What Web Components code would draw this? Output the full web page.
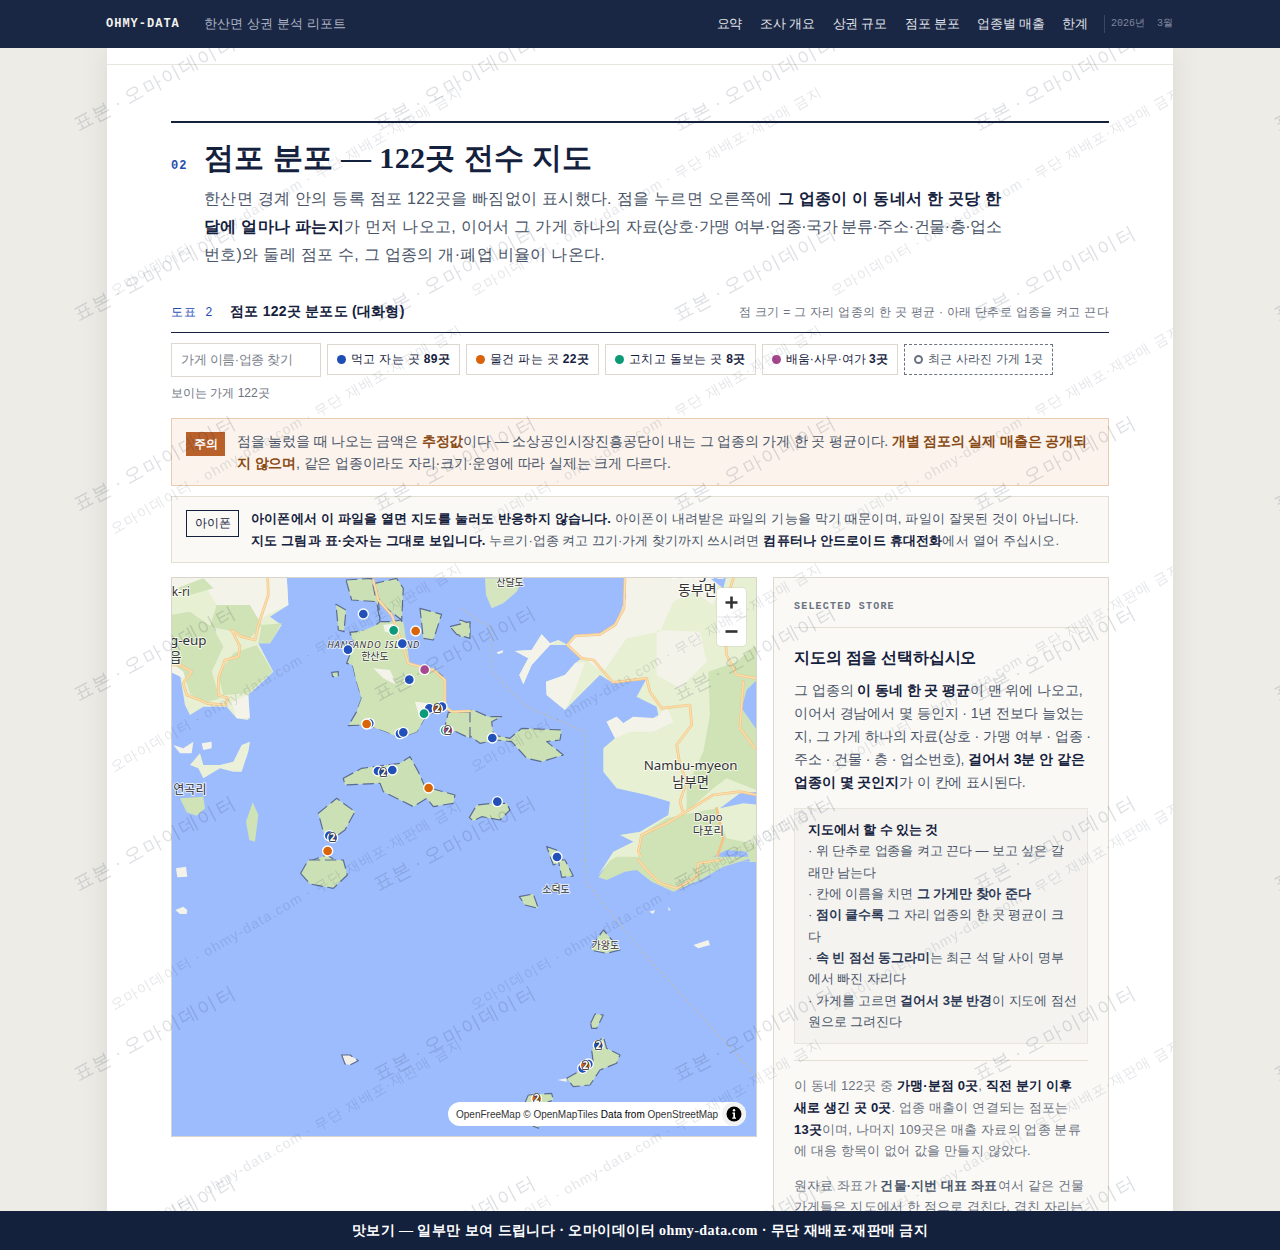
<!DOCTYPE html>
<html lang="ko">
<head>
<meta charset="utf-8">
<title>한산면 상권 분석 리포트</title>
<style>
  html, body { margin: 0; height: 100%; overflow: hidden; }
  body {
    background: #edece7;
    color: #14213d;
    font-family: "Liberation Sans", sans-serif;
    font-size: 14px;
  }
</style>
</head>
<body>
<ohmy-topbar title-text="한산면 상권 분석 리포트" period="2026년 3월"></ohmy-topbar>
<report-paper>
  <section-head num="02" heading="점포 분포 — 122곳 전수 지도">
    한산면 경계 안의 등록 점포 122곳을 빠짐없이 표시했다. 점을 누르면 오른쪽에 <b>그 업종이 이 동네서 한 곳당 한 달에 얼마나 파는지</b>가 먼저 나오고, 이어서 그 가게 하나의 <span style="letter-spacing:-.4px">자료(상호·가맹 여부·업종·국가 분류·주소·건물·층·업소</span>번호)와 둘레 점포 수, 그 업종의 개·폐업 비율이 나온다.
  </section-head>
  <figure-head label="도표 2" heading="점포 122곳 분포도 (대화형)" note="점 크기 = 그 자리 업종의 한 곳 평균 · 아래 단추로 업종을 켜고 끈다"></figure-head>
  <store-filter>
    <filter-chip color="#1f4db5" name="먹고 자는 곳" count="89곳"></filter-chip>
    <filter-chip color="#d9620a" name="물건 파는 곳" count="22곳"></filter-chip>
    <filter-chip color="#0b9a76" name="고치고 돌보는 곳" count="8곳"></filter-chip>
    <filter-chip color="#a5458c" name="배움·사무·여가" count="3곳" style="letter-spacing:0"></filter-chip>
    <filter-chip hollow name="최근 사라진 가게 1곳" style="letter-spacing:.25px"></filter-chip>
  </store-filter>
  <notice-box kind="warn" tag="주의">점을 눌렀을 때 나오는 금액은 <em>추정값</em>이다 — 소상공인시장진흥공단이 내는 그 업종의 가게 한 곳 평균이다. <em>개별 점포의 실제 매출은 공개되지 않으며</em>, 같은 업종이라도 자리·크기·운영에 따라 실제는 크게 다르다.</notice-box>
  <notice-box kind="info" tag="아이폰"><b>아이폰에서 이 파일을 열면 지도를 눌러도 반응하지 않습니다.</b> 아이폰이 내려받은 파일의 기능을 막기 때문이며, 파일이 잘못된 것이 아닙니다.<br><b>지도 그림과 표·숫자는 그대로 보입니다.</b> <span style="letter-spacing:0">누르기·업종 켜고 끄기·가게 찾기까지 쓰시려면</span> <strong>컴퓨터나 안드로이드 휴대전화</strong>에서 열어 주십시오.</notice-box>
  <map-layout>
    <store-map slot="map"></store-map>
    <store-panel slot="panel"></store-panel>
  </map-layout>
</report-paper>
<ohmy-watermark></ohmy-watermark>
<sample-bar>맛보기 — 일부만 보여 드립니다 · 오마이데이터 ohmy-data.com · 무단 재배포·재판매 금지</sample-bar>

<script>
const SANS = `"Liberation Sans", sans-serif`;
const MONO = `"Liberation Mono", monospace`;
const SERIF = `"Liberation Serif", serif`;
const LABEL = `"Noto Sans", "Noto Sans CJK KR", sans-serif`;

class OhmyTopbar extends HTMLElement {
  connectedCallback() {
    const root = this.attachShadow({ mode: "open" });
    const items = ["요약", "조사 개요", "상권 규모", "점포 분포", "업종별 매출", "한계"];
    root.innerHTML = `
      <style>
        :host { display: flex; align-items: center; height: 48px; padding: 0 107px 0 106px; background: #1a2744; position: relative; z-index: 3; }
        .brand { font: bold 12px ${MONO}; letter-spacing: 1px; color: #f2f2ee; width: 98px; }
        .name { font: 13px ${SANS}; color: #aeb5c4; flex: 1; letter-spacing: .13px; }
        nav { display: flex; gap: 18px; }
        nav span { font: 13px ${SANS}; color: #e1e4ea; letter-spacing: -.25px; }
        .period { font: 10px ${MONO}; color: #7d869c; margin-left: 16px; padding-left: 6px; border-left: 1px solid #3a4662; height: 18px; line-height: 18px; }
      </style>
      <div class="brand">OHMY-DATA</div>
      <div class="name">${this.getAttribute("title-text")}</div>
      <nav>${items.map((t) => `<span>${t}</span>`).join("")}</nav>
      <div class="period">${this.getAttribute("period").replace(" ", "&nbsp;&nbsp;")}</div>
    `;
  }
}
customElements.define("ohmy-topbar", OhmyTopbar);

class ReportPaper extends HTMLElement {
  constructor() {
    super();
    this.attachShadow({ mode: "open" }).innerHTML = `
      <style>
        :host { display: block; width: 1066px; margin: 0 auto; background: #fff; box-shadow: 0 0 28px rgba(60,55,40,.10); }
        .strip { height: 16px; border-bottom: 1px solid #e8e5dc; }
        .body { padding: 56px 64px 0; }
      </style>
      <div class="strip"></div>
      <div class="body"><slot></slot></div>
    `;
  }
}
customElements.define("report-paper", ReportPaper);

class SectionHead extends HTMLElement {
  connectedCallback() {
    this.attachShadow({ mode: "open" }).innerHTML = `
      <style>
        :host { display: block; border-top: 2px solid #14213d; padding-top: 14px; }
        .top { display: flex; align-items: flex-end; }
        .num { font: bold 12px/14px ${MONO}; color: #1f4db5; letter-spacing: 1px; width: 33px; padding-bottom: 6px; }
        h2 { margin: 0; font: bold 30px/42px ${SERIF}; color: #14213d; letter-spacing: .35px; }
        p { margin: 6px 0 0 33px; width: 802px; font: 16px/28px ${SANS}; color: #4a5568; letter-spacing: .3px; }
        ::slotted(b) { font-weight: 700; color: #14213d; }
      </style>
      <div class="top"><span class="num">${this.getAttribute("num")}</span><h2>${this.getAttribute("heading")}</h2></div>
      <p><slot></slot></p>
    `;
  }
}
customElements.define("section-head", SectionHead);

class FigureHead extends HTMLElement {
  connectedCallback() {
    this.attachShadow({ mode: "open" }).innerHTML = `
      <style>
        :host { display: flex; align-items: baseline; margin-top: 32px; padding-bottom: 10px; border-bottom: 1px solid #14213d; }
        .label { font: 12px ${MONO}; color: #1f4db5; letter-spacing: 1px; width: 59px; }
        .heading { font: bold 14px/20px ${SANS}; color: #14213d; flex: 1; letter-spacing: .25px; }
        .note { font: 12px/20px ${SANS}; color: #6b7280; letter-spacing: .3px; }
      </style>
      <span class="label">${this.getAttribute("label")}</span>
      <span class="heading">${this.getAttribute("heading")}</span>
      <span class="note">${this.getAttribute("note")}</span>
    `;
  }
}
customElements.define("figure-head", FigureHead);

class StoreFilter extends HTMLElement {
  constructor() {
    super();
    this.attachShadow({ mode: "open" }).innerHTML = `
      <style>
        :host { display: block; margin-top: 10px; }
        .row { display: flex; align-items: flex-start; gap: 6px; }
        .search { box-sizing: border-box; width: 150px; height: 34px; padding: 0 9px; border: 1px solid #ddd8ce; background: #fff; font: 13px/32px ${SANS}; color: #7a8089; white-space: nowrap; letter-spacing: -.35px; }
        .count { margin-top: 7px; font: 12px/18px ${SANS}; color: #6b7280; }
      </style>
      <div class="row"><div class="search">가게 이름·업종 찾기</div><slot></slot></div>
      <div class="count">보이는 가게 122곳</div>
    `;
  }
}
customElements.define("store-filter", StoreFilter);

class FilterChip extends HTMLElement {
  connectedCallback() {
    const hollow = this.hasAttribute("hollow");
    const color = this.getAttribute("color");
    this.attachShadow({ mode: "open" }).innerHTML = `
      <style>
        :host { display: inline-flex; align-items: center; box-sizing: border-box; height: 31px; margin-top: 1px; padding: 0 9px; gap: 5px; background: #fff; letter-spacing: .33px;
          border: 1px ${hollow ? "dashed #6b7280" : "solid #ddd8ce"}; font: 12px ${SANS}; color: ${hollow ? "#4a5568" : "#14213d"}; white-space: nowrap; }
        i { width: 9px; height: 9px; border-radius: 50%; ${hollow ? "box-sizing:border-box;border:2px solid #6b7280;" : `background:${color};`} }
        b { font-weight: 700; }
      </style>
      <i></i><span>${this.getAttribute("name")}${this.hasAttribute("count") ? ` <b>${this.getAttribute("count")}</b>` : ""}</span>
    `;
  }
}
customElements.define("filter-chip", FilterChip);

class NoticeBox extends HTMLElement {
  connectedCallback() {
    const warn = this.getAttribute("kind") === "warn";
    this.attachShadow({ mode: "open" }).innerHTML = `
      <style>
        :host { display: flex; align-items: flex-start; box-sizing: border-box; gap: 12px; padding: 11px 14px; margin-top: ${warn ? 16 : 10}px;
          background: ${warn ? "#fbf3ec" : "#faf9f6"}; border: 1px solid ${warn ? "#e8cdb0" : "#e2ded4"};
          font: ${warn ? "14px" : "13px"}/22px ${SANS}; letter-spacing: ${warn ? "-.16px" : ".19px"}; color: #4a5568; height: ${warn ? 68 : 67}px; }
        .tag { flex: none; box-sizing: border-box; margin-top: 2px; height: ${warn ? 24 : 27}px; padding: 0 7.5px; letter-spacing: 0; font: ${warn ? 700 : 500} 12px/${warn ? 24 : 25}px ${SANS};
          ${warn ? "background:#b8612b;color:#fff;" : "border:1px solid #14213d;color:#14213d;"} }
        ::slotted(em) { font-style: normal; font-weight: 700; color: #8a4a14; }
        ::slotted(b) { font-weight: 700; color: #14213d; }
        ::slotted(strong) { font-weight: 700; color: #14213d; }
      </style>
      <span class="tag">${this.getAttribute("tag")}</span>
      <div><slot></slot></div>
    `;
  }
}
customElements.define("notice-box", NoticeBox);

class MapLayout extends HTMLElement {
  constructor() {
    super();
    this.attachShadow({ mode: "open" }).innerHTML = `
      <style>
        :host { display: grid; grid-template-columns: 586px 336px; gap: 16px; margin-top: 14px; align-items: start; }
      </style>
      <slot name="map"></slot><slot name="panel"></slot>
    `;
  }
}
customElements.define("map-layout", MapLayout);

class StoreMap extends HTMLElement {
  marker(x, y, color, label) {
    const text = label ? `<text x="${x}" y="${y + 11}" text-anchor="middle" class="cnt">${label}</text>` : "";
    return `<circle cx="${x}" cy="${y}" r="15" fill="${color}" stroke="#fff" stroke-width="4"/>${text}`;
  }

  connectedCallback() {
    const B = "#2150b8", O = "#d9650a", G = "#0b9b78", P = "#a8488f";
    const m = (x, y, c, l) => this.marker(x, y, c, l);
    this.attachShadow({ mode: "open" }).innerHTML = `
      <style>
        :host { display: block; position: relative; box-sizing: border-box; width: 586px; height: 560px; border: 1px solid #d8d4ca; overflow: hidden; background: #9dbcfd; }
        svg { display: block; width: 584px; height: 558px; }
        .land { fill: #e7f0d3; }
        .white { fill: #f4f3ea; }
        .green { fill: #cfe3b6; }
        .isle { fill: #cbe0b4; stroke: #5a6c94; stroke-width: 3.5; stroke-dasharray: 34 14; stroke-linejoin: round; }
        .road { fill: none; stroke: #f4c384; stroke-width: 8; stroke-linejoin: round; stroke-linecap: round; }
        .road2 { fill: none; stroke: #fbe0ae; stroke-width: 4; stroke-linejoin: round; stroke-linecap: round; }
        .sea { fill: #9dbcfd; }
        .border { fill: none; stroke: #bdb9ab; stroke-width: 3.5; stroke-dasharray: 8 8; }
        text { font-family: ${LABEL}; }
        .lab { fill: #333; paint-order: stroke; stroke: rgba(255,255,255,.75); stroke-width: 2px; stroke-linejoin: round; }
        .cnt { font: bold 30px ${LABEL}; fill: #fff; stroke: #333; stroke-width: 5; paint-order: stroke; }
        .zoom { position: absolute; right: 10px; top: 10px; width: 29px; height: 58px; background: #fff; border-radius: 4px; box-shadow: 0 0 0 1px rgba(0,0,0,.05); }
        .zoom svg { width: 29px; height: 58px; }
        .attr { position: absolute; right: 10px; bottom: 10px; display: flex; align-items: center; box-sizing: border-box; height: 24px; width: 298px; padding-left: 8px; border-radius: 12px; background: #fff; font: 10px "Liberation Sans", sans-serif; color: #333; white-space: nowrap; }
        .attr b { font-weight: 400; color: #000; }
        .attr svg { position: absolute; right: 2px; top: 2px; width: 20px; height: 20px; }
        .attr .ring { position: absolute; right: 0; top: 0; width: 24px; height: 24px; border-radius: 50%; background: #f2f2f2; }
      </style>
      <svg viewBox="172 578 584 558" xmlns="http://www.w3.org/2000/svg">
        <g transform="translate(460,575) scale(.3333)">
          <path class="border" d="M0,98 L95,160 L95,290 L200,395 L375,470 L375,860"/>
          <path class="land" d="M495,0 L498,70 L470,140 L430,175 L345,180 L320,208 L295,195 L270,205 L245,178 L215,225 L165,228 L205,250 L178,300 L190,328 L215,270 L270,210 L320,210 L365,250 L345,265 L315,300 L258,320 L260,360 L315,405 L350,370 L420,300 L460,325 L560,310 L530,365 L590,395 L595,420 L560,440 L520,425 L490,445 L470,425 L440,440 L465,490 L430,520 L430,590 L470,640 L560,660 L630,680 L625,720 L540,770 L480,780 L520,800 L460,830 L415,900 L450,860 L900,860 L900,0 Z"/>
          <path class="white" d="M495,0 L498,70 L470,140 L430,175 L345,180 L320,208 L370,250 L430,290 L500,190 L600,170 L640,80 L700,50 L760,90 L780,0 Z M245,178 L215,225 L165,228 L205,250 L178,300 L190,328 L215,270 L270,210 L295,195 L270,205 Z M258,320 L315,300 L345,265 L375,262 L345,345 L315,405 L260,360 Z M440,440 L470,425 L490,445 L520,425 L590,430 L620,395 L640,440 L580,470 L510,470 L465,490 Z M590,165 L720,170 L740,260 L660,340 L590,300 Z"/>
          <path class="green" d="M745,290 L830,260 L880,215 L900,215 L900,650 L800,610 L760,640 L680,710 L680,640 L730,530 L750,420 Z"/>
          <path class="green" d="M540,860 L540,780 L620,730 L690,715 L770,700 L800,790 L900,810 L900,860 Z"/>
          <path class="sea" d="M900,305 L860,345 L845,400 L900,478 Z M900,650 L840,655 L780,700 L850,685 L900,690 Z M790,40 L750,10 L800,0 Z M700,860 L750,850 L800,825 L860,830 L870,860 Z"/>
          <path class="road" d="M495,10 L492,100 L465,150 L420,178 L345,183 L322,210 L365,250 L400,255 L435,295 L460,322 L560,310 L570,350 L605,400 L690,390 L695,450 L650,510 L660,570 L680,620 L660,680 L670,715 L620,745 L545,780 L535,830 L550,860 M670,715 L760,660 L840,650 L890,660 M820,10 L790,110 L800,240 L830,300 L890,310 M850,320 L840,460 L885,520 M700,850 L770,850 L790,790 L770,700"/>
          <path class="road2" d="M495,10 L492,100 L465,150 L420,178 L345,183 L322,210 L365,250 L400,255 L435,295 L460,322 L560,310 L570,350 L605,400 L690,390 L695,450 L650,510 L660,570 L680,620 L660,680 L670,715 L620,745 L545,780 L535,830 L550,860 M670,715 L760,660 L840,650 L890,660 M820,10 L790,110 L800,240 L830,300 L890,310 M850,320 L840,460 L885,520"/>
          <path class="isle" d="M0,410 L40,405 L85,425 L125,425 L95,440 L100,480 L150,490 L185,460 L305,465 L300,495 L260,500 L310,540 L245,560 L200,550 L155,500 L110,495 L60,505 L0,460 Z"/>
          <path class="isle" d="M28,728 L50,690 L95,685 L140,685 L150,705 L120,735 L65,725 L40,738 Z"/>
          <path class="isle" d="M0,135 L30,145 L30,175 L0,188 Z"/>
          <path class="isle" d="M260,815 L290,825 L310,860 L280,870 Z"/>
          <path class="white" d="M110,232 L128,226 L130,232 L115,238 Z"/>
          <path class="isle" style="fill:#d4e5c0;stroke:none" d="M75,10 L190,10 L170,50 L130,85 L95,100 L78,60 Z"/>
        </g>
        <g transform="translate(460,860) scale(.3333)">
          <path class="border" d="M375,0 L380,70 L560,290 L890,650"/>
          <path class="green" d="M415,52 L450,2 L470,-10 L890,-10 L790,20 L720,60 L640,95 L575,65 L530,30 L495,35 L440,60 Z"/>
          <path class="road" d="M535,0 L560,30 L600,70 L650,85 L710,50 L715,10 L780,0"/>
          <path class="road2" d="M535,0 L560,30 L600,70 L650,85 L710,50 L715,10 L780,0"/>
          <path class="isle" d="M295,0 L315,0 L340,48 L305,52 Z"/>
          <path class="isle" d="M178,110 L220,102 L235,145 L195,135 Z"/>
          <path class="isle" d="M275,75 L295,70 L300,95 L275,95 Z"/>
          <path class="isle" d="M392,265 L430,210 L465,250 L480,270 L440,280 L400,272 Z"/>
          <path class="isle" d="M392,490 L405,462 L430,465 L410,505 L395,505 Z"/>
          <path class="isle" d="M320,655 L400,610 L395,570 L430,530 L440,565 L480,585 L470,610 L420,630 L390,675 L340,680 Z"/>
          <path class="isle" d="M205,705 L275,700 L280,720 L255,730 L235,805 L200,790 L190,740 Z"/>
          <path class="white" d="M700,255 L745,240 L750,255 L715,265 Z M568,155 L585,150 L580,162 Z M625,140 L632,150 L626,152 Z"/>
          <path class="white" d="M292,660 L320,655 L320,665 Z"/>
        </g>
        <g transform="translate(170,575) scale(.3333)">
          <path class="land" d="M0,0 L350,0 L355,90 L300,125 L335,150 L300,205 L265,205 L310,290 L235,360 L235,435 L200,430 L170,395 L100,395 L60,420 L45,390 L30,300 L0,290 Z"/>
          <path class="white" d="M0,0 L350,0 L355,90 L290,120 L250,155 L180,130 L140,90 L110,40 L30,50 L0,70 Z M185,380 L235,360 L240,430 L200,430 Z M0,250 L60,290 L40,310 L0,290 Z"/>
          <path class="green" d="M140,90 L240,90 L275,150 L240,190 L170,165 L120,155 Z M0,120 L60,110 L130,160 L160,215 L125,290 L150,370 L100,385 L60,355 L40,290 L0,260 Z M190,235 L260,210 L308,290 L235,355 L160,360 L145,300 Z M275,150 L335,145 L300,205 L265,205 Z M100,10 L130,40 L60,60 L20,40 Z"/>
          <path class="road" d="M293,10 L295,60 L265,150 L255,195 L215,185 L185,165 L210,215 L205,245 L165,255 L145,310 L145,360 L175,370 L165,390 L110,385 L90,375 L50,360 L40,325 L65,290 L30,270 L0,270"/>
          <path class="road2" d="M293,10 L295,60 L265,150 L255,195 L215,185 L185,165 L210,215 L205,245 L165,255 L145,310 L145,360 L175,370 L165,390 L110,385 L90,375 L50,360 L40,325 L65,290 L30,270 L0,270"/>
          <path class="white" d="M10,510 L40,520 L70,500 L65,535 L30,535 Z M95,505 L125,500 L125,520 L100,525 Z"/>
          <path class="white" d="M90,535 L100,570 L150,570 L190,560 L215,510 L240,500 L235,530 L215,590 L190,590 L150,580 L100,610 L85,580 L60,570 Z" style="fill:#eaf1d8"/>
          <path class="green" d="M30,670 L100,665 L105,700 L80,722 L50,712 Z"/>
          <path class="green" d="M228,740 L248,682 L265,720 L255,800 L238,795 Z"/>
          <path class="isle" d="M528,15 L605,10 L615,60 L625,70 L630,140 L600,165 L540,172 L552,205 L530,265 L548,270 L560,320 L575,370 L560,410 L535,452 L590,450 L650,470 L690,490 L740,470 L770,420 L825,400 L825,310 L790,280 L735,270 L715,265 L695,200 L695,135 L650,100 L625,70 L615,25 L680,10 L700,40 L695,135 L660,140 L630,140 L620,80 L545,75 Z"/>
          <path class="green" d="M620,150 L700,140 L720,270 L800,285 L825,320 L825,400 L770,420 L740,470 L690,490 L650,470 L590,450 L560,410 L575,370 L560,320 L548,270 L552,205 L560,175 Z"/>
          <path class="white" d="M610,280 L660,285 L680,330 L640,310 Z M735,380 L780,385 L745,415 Z M640,150 L680,145 L680,175 L645,170 Z"/>
          <path class="isle" d="M498,88 L528,105 L522,170 L505,165 Z"/>
          <path class="isle" d="M750,100 L815,118 L790,195 L760,190 Z"/>
          <path class="isle" d="M840,155 L900,140 L900,190 L860,178 Z"/>
          <path class="isle" d="M485,292 L505,290 L505,305 L488,305 Z"/>
          <path class="isle" d="M900,410 L835,412 L825,455 L900,490 Z"/>
          <path class="isle" d="M520,610 L575,580 L690,565 L720,545 L745,590 L765,635 L855,660 L850,685 L790,695 L770,670 L730,695 L640,650 L630,625 L525,630 Z"/>
          <path class="isle" d="M445,715 L500,670 L555,710 L525,765 L490,790 L460,770 Z"/>
          <path class="isle" d="M415,860 L470,840 L520,870 L530,900 L415,900 Z"/>
          <path class="road" d="M610,15 L625,75 L665,120 L695,200 L715,265 L790,285 L825,315 L825,395 L845,410 L900,408"/>
          <path class="road2" d="M610,15 L625,75 L665,120 L695,200 L715,265 L790,285 L825,315 L825,395 L845,410 L900,408"/>
        </g>
        <g transform="translate(170,860) scale(.3333)">
          <path class="isle" d="M392,40 L415,0 L520,0 L532,45 L490,85 L420,72 Z"/>
          <path class="white" d="M18,25 L48,20 L52,50 L22,52 Z M16,150 L40,140 L52,150 L50,162 L30,162 Z"/>
          <path class="isle" style="fill:#f1efe8" d="M515,585 L540,585 L565,602 L540,615 L525,612 Z"/>
        </g>
        <g transform="translate(460,575) scale(.3333)">
          <text class="lab" x="150" y="33" text-anchor="middle" style="font-size:30px;stroke-width:6px">산달도</text>
          <text class="lab" x="712" y="10" text-anchor="middle" style="font-size:42px;stroke-width:6px">Dongbu</text>
          <text class="lab" x="712" y="59" text-anchor="middle" style="font-size:42px;stroke-width:6px">동부면</text>
          <text class="lab" x="692" y="585" text-anchor="middle" style="font-size:40px;stroke-width:6px">Nambu-myeon</text>
          <text class="lab" x="692" y="635" text-anchor="middle" style="font-size:40px;stroke-width:6px">남부면</text>
          <text class="lab" x="745" y="738" text-anchor="middle" style="font-size:34px;stroke-width:6px">Dapo</text>
          <text class="lab" x="745" y="781" text-anchor="middle" style="font-size:34px;stroke-width:6px">다포리</text>
          <text class="lab" x="288" y="953" text-anchor="middle" style="font-size:30px;stroke-width:6px">소덕도</text>
          <text class="lab" x="436" y="1122" text-anchor="middle" style="font-size:30px;stroke-width:6px">가왕도</text>
        </g>
        <g transform="translate(170,575) scale(.3333)">
          <text class="lab" x="5" y="62" style="font-size:36px;stroke-width:6px">k-ri</text>
          <text class="lab" x="0" y="211" style="font-size:40px;stroke-width:6px">g-eup</text>
          <text class="lab" x="-2" y="261" style="font-size:40px;stroke-width:6px">읍</text>
          <text class="lab" x="10" y="656" style="font-size:36px;stroke-width:6px">연곡리</text>
          <text class="lab" x="472" y="220" style="font-size:28px;font-style:italic;letter-spacing:2.5px;stroke-width:5px">HANSANDO ISLAND</text>
          <text class="lab" x="615" y="255" text-anchor="middle" style="font-size:30px;stroke-width:5px">한산도</text>
          ${m(580, 117, B)}${m(671, 166, G)}${m(737, 168, O)}${m(697, 206, B)}${m(534, 224, B)}${m(764, 284, P)}${m(718, 314, B)}
          ${m(816, 395, B)}${m(778, 400, B)}${m(802, 401, "#b45a14", "2")}${m(762, 416, G)}
          ${m(598, 445, B)}${m(590, 447, O)}${m(690, 476, B)}${m(700, 472, B)}
          ${m(826, 466, G)}${m(834, 466, P, "2")}
          ${m(624, 588, B)}${m(640, 592, B, "2")}${m(667, 585, B)}${m(776, 639, O)}
          ${m(478, 782, B)}${m(488, 788, B, "2")}${m(473, 828, O)}
        </g>
        <g transform="translate(460,575) scale(.3333)">
          ${m(97, 489, B)}${m(112, 680, B)}${m(291, 846, B)}
        </g>
        <g transform="translate(460,860) scale(.3333)">
          ${m(415, 556, B, "2")}${m(385, 612, B)}${m(368, 625, B)}${m(376, 616, O, "2")}${m(230, 716, O, "2")}
        </g>
      </svg>
      <div class="zoom">
        <svg viewBox="0 0 29 58">
          <path d="M14.5 8.5v12M8.5 14.5h12" stroke="#333" stroke-width="2.6" fill="none"/>
          <path d="M0 29h29" stroke="#e5e5e5" stroke-width="1"/>
          <path d="M8.5 43.5h12" stroke="#333" stroke-width="2.6" fill="none"/>
        </svg>
      </div>
      <div class="attr">
        <span>OpenFreeMap © OpenMapTiles <b>Data from</b> OpenStreetMap</span>
        <span class="ring"></span>
        <svg viewBox="0 0 20 20">
          <circle cx="10" cy="10" r="7.5" fill="#000"/>
          <circle cx="10" cy="6.2" r="1.2" fill="#fff"/>
          <path d="M8.4 8.6h2.6v5h1v1.2H8.2v-1.2h1.1V9.8H8.4z" fill="#fff"/>
        </svg>
      </div>
    `;
  }
}
customElements.define("store-map", StoreMap);

class StorePanel extends HTMLElement {
  connectedCallback() {
    this.attachShadow({ mode: "open" }).innerHTML = `
      <style>
        :host { display: block; box-sizing: border-box; padding: 0 20px 24px; background: #faf9f6; border: 1px solid #ddd8ce; font: 14px/23px ${SANS}; color: #4a5568; }
        b { font-weight: 700; color: #14213d; }
        .eyebrow { height: 50px; box-sizing: border-box; padding-top: 22px; border-bottom: 1px solid #e4dfd5; font: bold 10px/14px ${MONO}; letter-spacing: 1.2px; color: #6b7280; }
        h3 { margin: 18px 0 9px; font: bold 16px/24px ${SANS}; color: #14213d; letter-spacing: -.2px; }
        p { margin: 0; }
        .lead { white-space: nowrap; letter-spacing: -.08px; }
        .guide { margin-top: 14px; padding: 10px 13px 11px; background: #f4f3f0; border: 1px solid #e8e5dd; font-size: 13px; line-height: 21.33px; white-space: nowrap; letter-spacing: -.08px; }
        .guide strong { display: block; font-weight: 700; color: #14213d; }
        .guide b { color: #2c3a55; font-weight: 700; }
        .guide div { color: #4a5568; }
        hr { border: 0; border-top: 1px solid #e4dfd5; margin: 16px 0 14px; }
        .stats { font-size: 13px; letter-spacing: .15px; line-height: 21.7px; color: #6b7280; }
        .stats + .stats { margin-top: 12.5px; }
        .stats .dim { font-weight: 700; color: #4a5568; }
        .keep { white-space: nowrap; }
      </style>
      <div class="eyebrow">SELECTED STORE</div>
      <h3>지도의 점을 선택하십시오</h3>
      <p class="lead">그 업종의 <b>이 동네 한 곳 평균</b>이 맨 위에 나오고,<br>이어서 경남에서 몇 등인지 · 1년 전보다 늘었는<br>지, 그 가게 하나의 자료(상호 · 가맹 여부 · 업종 ·<br>주소 · 건물 · 층 · 업소번호), <b>걸어서 3분 안 같은<br>업종이 몇 곳인지</b>가 이 칸에 표시된다.</p>
      <div class="guide">
        <strong>지도에서 할 수 있는 것</strong>
        <div>· 위 단추로 업종을 켜고 끈다 — 보고 싶은 갈<br>래만 남는다</div>
        <div>· 칸에 이름을 치면 <b>그 가게만 찾아 준다</b></div>
        <div>· <b>점이 클수록</b> 그 자리 업종의 한 곳 평균이 크<br>다</div>
        <div>· <b>속 빈 점선 동그라미</b>는 최근 석 달 사이 명부<br>에서 빠진 자리다</div>
        <div>· 가게를 고르면 <b>걸어서 3분 반경</b>이 지도에 점선<br>원으로 그려진다</div>
      </div>
      <hr>
      <p class="stats">이 동네 122곳 중 <b>가맹·분점 0곳</b>, <b>직전 분기 이후 새로 생긴 곳 0곳</b>. 업종 매출이 연결되는 점포는 <b class="keep">13곳</b>이며, 나머지 109곳은 매출 자료의 업종 분류에 대응 항목이 없어 값을 만들지 않았다.</p>
      <p class="stats">원자료 좌표가 <span class="dim">건물·지번 대표 좌표</span>여서 같은 건물 가게들은 지도에서 한 점으로 겹친다. 겹친 자리는 숫자로 표시된다.</p>
    `;
  }
}
customElements.define("store-panel", StorePanel);

class OhmyWatermark extends HTMLElement {
  connectedCallback() {
    const big = [];
    for (let y = 134; y < 1300; y += 190) {
      for (let x = 79; x < 1300; x += 300) big.push(`<span class="big" style="left:${x}px;top:${y}px">표본 · 오마이데이터</span>`);
    }
    const small = [];
    for (let y = 298; y < 1300; y += 238) {
      for (let x = 8; x < 1100; x += 360) small.push(`<span class="small" style="left:${x}px;top:${y}px">오마이데이터 · ohmy-data.com · 무단 재배포·재판매 금지</span>`);
    }
    this.attachShadow({ mode: "open" }).innerHTML = `
      <style>
        :host { position: fixed; inset: 0; z-index: 2; pointer-events: none; overflow: hidden; display: block; }
        span { position: absolute; white-space: nowrap; transform-origin: 0 100%; font-family: ${SANS}; line-height: 1; }
        .big { transform: translateY(-100%) rotate(-28deg); font-size: 19px; letter-spacing: 1.7px; word-spacing: -3px; color: rgba(26,39,68,.15); }
        .small { transform: translateY(-100%) rotate(-30deg); font-size: 14px; letter-spacing: 1.2px; color: rgba(26,39,68,.12); }
        .clip { position: absolute; left: 107px; right: 107px; top: 0; bottom: 0; overflow: hidden; }
      </style>
      ${big.join("")}
      <div class="clip">${small.join("")}</div>
    `;
  }
}
customElements.define("ohmy-watermark", OhmyWatermark);

class SampleBar extends HTMLElement {
  constructor() {
    super();
    this.attachShadow({ mode: "open" }).innerHTML = `
      <style>
        :host { position: fixed; left: 0; right: 0; bottom: 0; height: 39px; z-index: 3; display: flex; align-items: center; justify-content: center; background: #14213d; color: #fff; font: bold 14px ${SERIF}; letter-spacing: .45px; }
      </style>
      <slot></slot>
    `;
  }
}
customElements.define("sample-bar", SampleBar);
</script>
</body>
</html>
